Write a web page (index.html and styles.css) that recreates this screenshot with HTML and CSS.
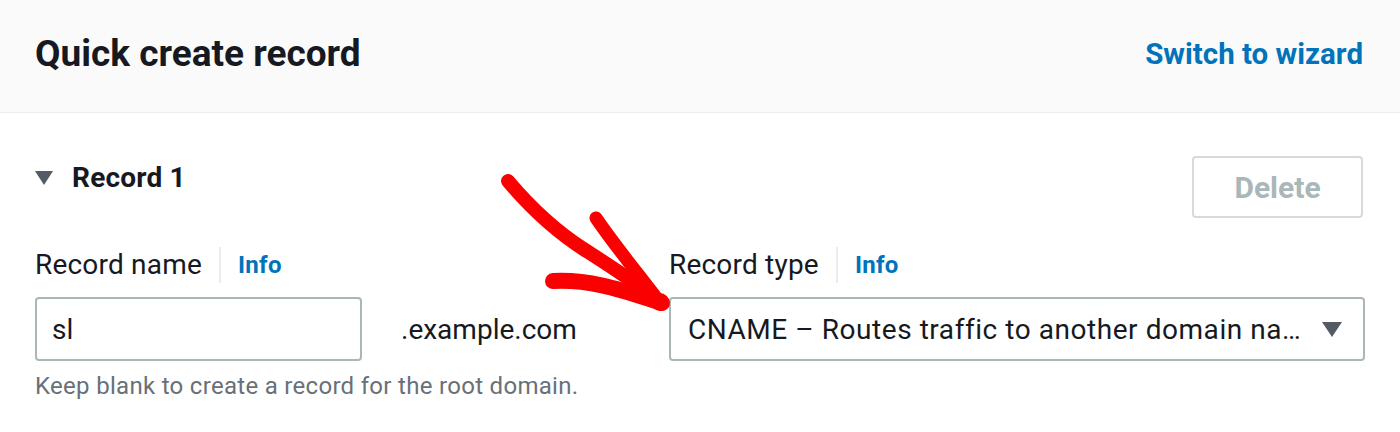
FILE: index.html
```html
<!DOCTYPE html>
<html lang="en">
<head>
<meta charset="utf-8">
<title>Quick create record</title>
<link rel="stylesheet" href="styles.css">
</head>
<body>
<div class="panel">
  <header class="panel-header">
    <h2 class="panel-title">Quick create record</h2>
    <a class="wizard-link" href="#">Switch to wizard</a>
  </header>
  <section class="record">
    <div class="record-head">
      <div class="record-toggle">
        <svg class="caret" width="18" height="14" viewBox="0 0 18 14"><polygon points="0,0 18,0 9,14" fill="#545b64"/></svg>
        <h3 class="record-title">Record 1</h3>
      </div>
      <button class="btn-delete" type="button" disabled>Delete</button>
    </div>
    <div class="fields">
      <div class="label-row"><span class="label">Record name</span><span class="info">Info</span></div>
      <div class="spacer"></div>
      <div class="label-row"><span class="label">Record type</span><span class="info">Info</span></div>
      <div class="input">sl</div>
      <div class="suffix">.example.com</div>
      <div class="select">
        <span class="select-value">CNAME – Routes traffic to another domain na…</span>
        <svg class="select-caret" width="20" height="15" viewBox="0 0 20 15"><polygon points="0,0 20,0 10,15" fill="#545b64"/></svg>
      </div>
      <div class="hint">Keep blank to create a record for the root domain.</div>
    </div>
  </section>
  <svg class="annotation" width="1400" height="432" viewBox="0 0 1400 432">
    <g fill="none" stroke="#fb0000" stroke-linecap="round" stroke-linejoin="round">
      <path d="M508,181 C535,213 560,234 585,250 S640,285 658,301" stroke-width="14"/>
      <path d="M596,218 C615,246 640,276 658,300" stroke-width="13"/>
      <path d="M553,281 C592,279 624,291 662,303" stroke-width="16"/>
    </g>
    <circle cx="660" cy="302" r="9" fill="#fb0000"/>
  </svg>
</div>
</body>
</html>
```
FILE: styles.css
```css
* { box-sizing: border-box; }
html, body { margin: 0; padding: 0; background: #ffffff; }
body {
  font-family: Roboto, "Liberation Sans", sans-serif;
  color: #16191f;
  width: 1400px;
  height: 432px;
  overflow: hidden;
}
.panel { position: relative; width: 1400px; height: 432px; }
.panel-header {
  height: 113px;
  background: #fafafa;
  border-bottom: 1px solid #eaeded;
  display: flex;
  align-items: center;
  justify-content: space-between;
  padding: 0 37px 4px 35px;
}
.panel-title {
  margin: 0;
  font-size: 37px;
  font-weight: 700;
  line-height: 44px;
  color: #16191f;
}
.wizard-link {
  font-size: 29.5px;
  font-weight: 700;
  color: #0073bb;
  text-decoration: none;
  line-height: 40px;
}
.record { padding: 43px 35px 0 35px; }
.record-head {
  display: flex;
  justify-content: space-between;
  align-items: flex-start;
  padding-right: 2px;
}
.record-toggle {
  display: flex;
  align-items: center;
  gap: 19px;
  height: 44px;
}
.record-title {
  margin: 0;
  font-size: 28px;
  font-weight: 700;
  line-height: 44px;
  letter-spacing: 0.2px;
}
.btn-delete {
  width: 171px;
  height: 62px;
  border: 2px solid #d5dbdb;
  border-radius: 4px;
  background: #ffffff;
  color: #aab7b8;
  font-family: Roboto, "Liberation Sans", sans-serif;
  font-size: 30px;
  font-weight: 700;
  padding: 0;
}
.fields {
  display: grid;
  grid-template-columns: 327px 1fr 696px;
  margin-top: 27px;
}
.label-row {
  display: flex;
  align-items: center;
  height: 40px;
}
.label {
  font-size: 28px;
  line-height: 40px;
  padding-right: 17px;
  letter-spacing: 0.2px;
}
.info {
  font-size: 24px;
  font-weight: 700;
  color: #0073bb;
  border-left: 2px solid #eaeded;
  padding-left: 17px;
  line-height: 36px;
  letter-spacing: 0.3px;
}
.input {
  margin-top: 12px;
  height: 64px;
  border: 2px solid #aab7b8;
  border-radius: 4px;
  padding: 0 15px;
  display: flex;
  align-items: center;
  font-size: 28px;
}
.suffix {
  margin-top: 12px;
  height: 64px;
  display: flex;
  align-items: center;
  padding-left: 39px;
  font-size: 28px;
}
.select {
  margin-top: 12px;
  height: 64px;
  border: 2px solid #aab7b8;
  border-radius: 4px;
  padding: 0 21px 0 17px;
  display: flex;
  align-items: center;
  justify-content: space-between;
  font-size: 28px;
  white-space: nowrap;
}
.select-value { letter-spacing: 0.55px; }
.hint {
  grid-column: 1 / 4;
  margin-top: 9px;
  font-size: 24px;
  line-height: 32px;
  color: #687078;
  letter-spacing: 0.3px;
}
.annotation {
  position: absolute;
  left: 0;
  top: 0;
  pointer-events: none;
}
```
